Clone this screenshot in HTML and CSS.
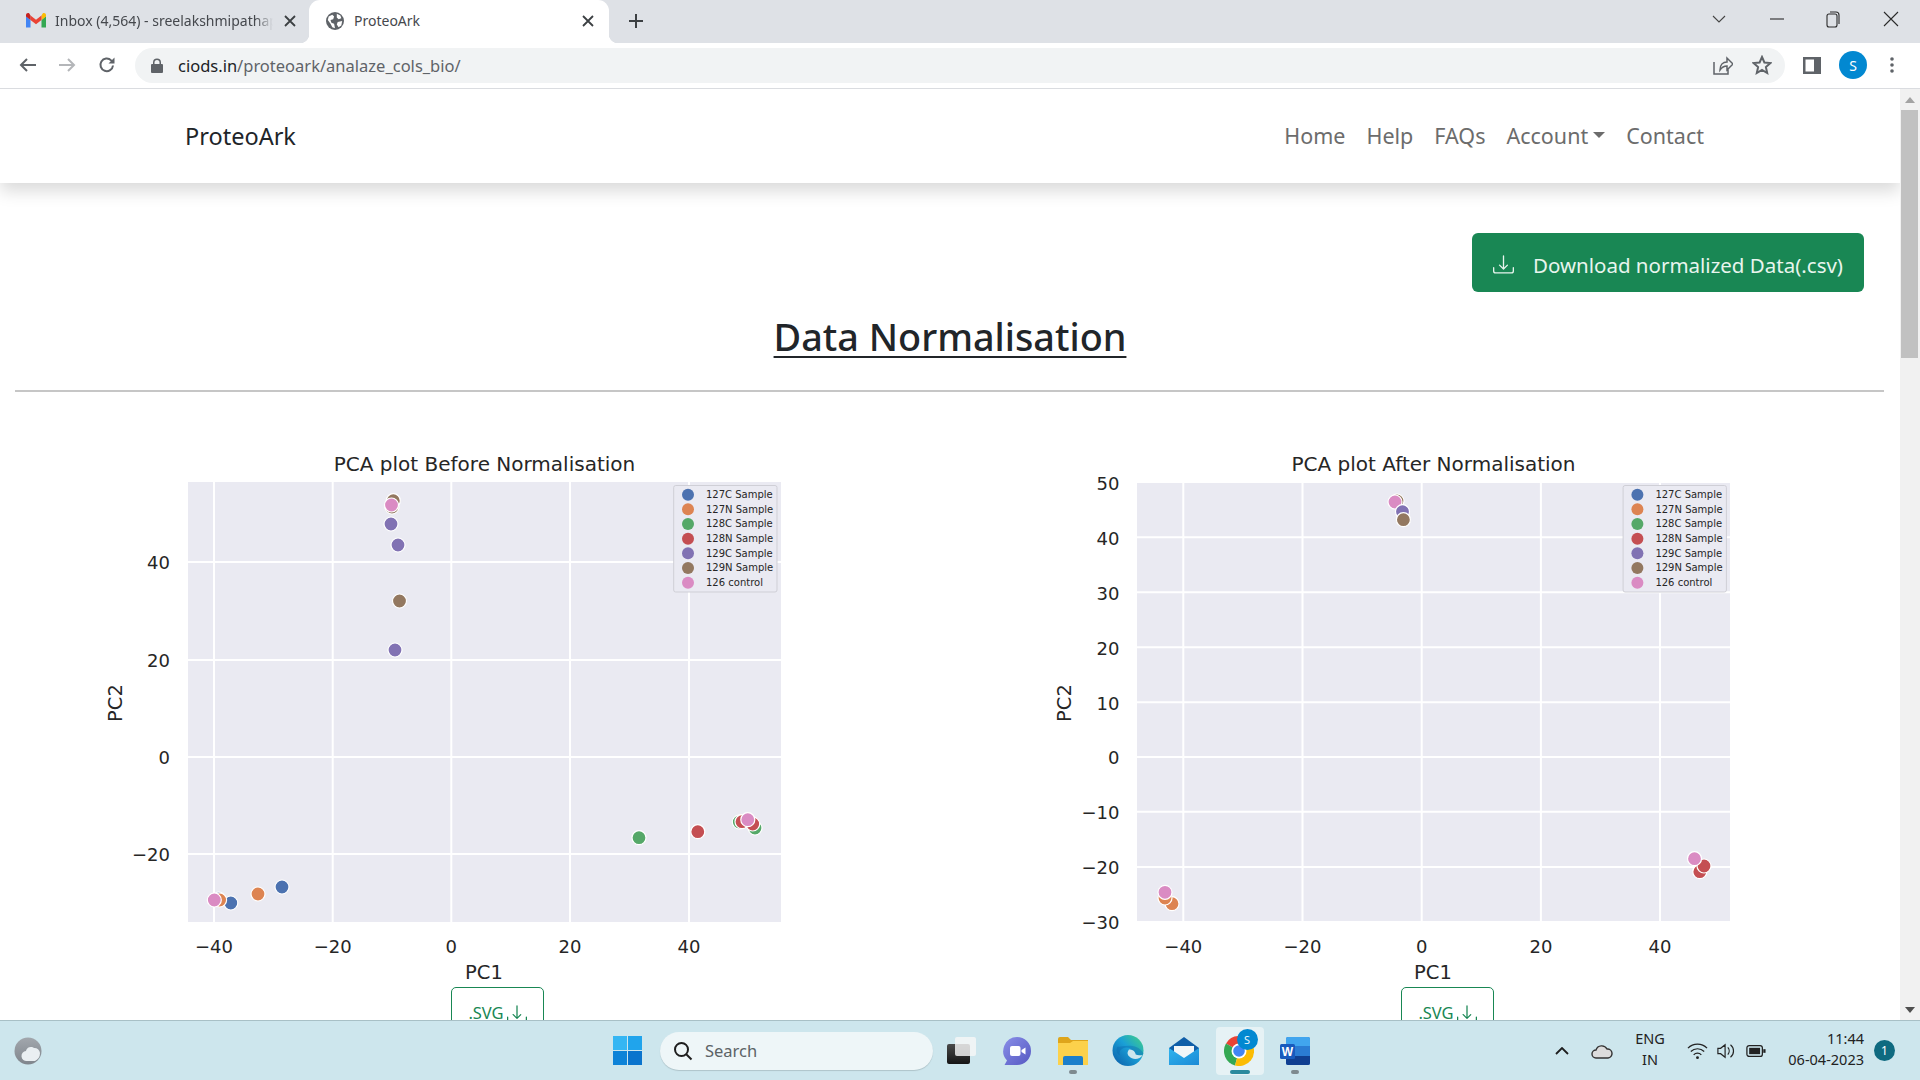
FILE: index.html
```html
<!DOCTYPE html>
<html lang="en">
<head>
<meta charset="utf-8">
<title>ProteoArk</title>
<link rel="stylesheet" href="styles.css">
</head>
<body>
<div class="tabstrip">
  <div class="tab tab-inactive">
    <svg class="tab-ico" viewBox="0 0 20 16" width="20" height="16"><path d="M0 3v11.500h4.500V7z" fill="#4285f4"/><path d="M15.500 7v7.500H20V3z" fill="#34a853"/><path d="M15.500 2.500V7L20 3.500V2c0-1.700-2-2.600-3.300-1.500z" fill="#fbbc04"/><path d="M4.500 7V2.500L10 6.700l5.500-4.200V7L10 11.200z" fill="#ea4335"/><path d="M0 2v1.500L4.500 7V2.500L3.300.5C2-.6 0 .3 0 2z" fill="#c5221f"/></svg>
    <span class="tab-title tab-title-fade">Inbox (4,564) - sreelakshmipathap</span>
    <svg class="tab-close" viewBox="0 0 12 12" width="12" height="12"><path d="M1 1l10 10M11 1L1 11"/></svg>
  </div>
  <div class="tab tab-active">
    <svg class="tab-globe" viewBox="0 0 20 20" width="18" height="18"><circle cx="10" cy="10" r="10" fill="#5f6368"/><path d="M3 5l4-2 2 2-1 3-3 1 1 3 3 1 1 5-3-1-2-4-3-4zM12 2l4 2 1 3-3 1-2-2zM13 11l5-1-1 5-3 2-2-3z" fill="#fff"/></svg>
    <span class="tab-title">ProteoArk</span>
    <svg class="tab-close" viewBox="0 0 12 12" width="12" height="12"><path d="M1 1l10 10M11 1L1 11"/></svg>
  </div>
  <svg class="newtab" viewBox="0 0 16 16" width="16" height="16"><path d="M8 1v14M1 8h14"/></svg>
  <div class="win-controls">
    <svg class="win-ico win-chev" viewBox="0 0 14 8" width="14" height="8"><path d="M1 1l6 6 6-6"/></svg>
    <svg class="win-ico win-min" viewBox="0 0 14 2" width="14" height="2"><path d="M0 1h14"/></svg>
    <svg class="win-ico win-max" viewBox="0 0 14 17" width="14" height="17"><rect x="1" y="3" width="10" height="13" rx="2"/><path d="M4 1h6a3 3 0 0 1 3 3v9"/></svg>
    <svg class="win-ico win-x" viewBox="0 0 16 16" width="16" height="16"><path d="M1 1l14 14M15 1L1 15"/></svg>
  </div>
</div>
<div class="toolbar">
  <svg class="tb-ico tb-back" viewBox="0 0 18 16" width="18" height="16"><path d="M17 8H2M8 2L2 8l6 6"/></svg>
  <svg class="tb-ico tb-fwd" viewBox="0 0 18 16" width="18" height="16"><path d="M1 8h15M10 2l6 6-6 6"/></svg>
  <svg class="tb-ico tb-reload" viewBox="0 0 18 18" width="18" height="18"><path d="M15 9.500A6.300 6.300 0 1 1 13.200 4.400L15.500 6.500"/><path class="solid" d="M16.500 1.500v6h-6z"/></svg>
  <div class="omnibox">
    <svg class="lock" viewBox="0 0 12 15" width="12" height="15"><path d="M2 6V4.500a4 4 0 0 1 8 0V6h1a1 1 0 0 1 1 1v7a1 1 0 0 1-1 1H1a1 1 0 0 1-1-1V7a1 1 0 0 1 1-1zm1.500 0h5V4.500a2.500 2.500 0 0 0-5 0z" fill="#5f6368"/></svg>
    <span class="url"><span class="url-host">ciods.in</span>/proteoark/analaze_cols_bio/</span>
    <svg class="omni-ico omni-share" viewBox="0 0 20 20" width="20" height="20"><path d="M1 7v12h14v-5M7 15c0-5 3-8 7-8V3l6 6-6 6v-4c-3 0-5 1-7 4z"/></svg>
    <svg class="omni-ico omni-star" viewBox="0 0 20 20" width="20" height="20"><path d="M10 2l2.400 5.500 6 .6-4.500 4 1.300 5.900L10 15l-5.200 3 1.300-5.900-4.500-4 6-.6z"/></svg>
  </div>
  <svg class="side-ico" viewBox="0 0 18 17" width="18" height="17"><path d="M0 0h18v17H0zm2.500 2.500v12H11v-12z" fill="#5f6368"/></svg>
  <div class="avatar">S</div>
  <svg class="kebab" viewBox="0 0 4 16" width="4" height="16"><circle cx="2" cy="2" r="1.800"/><circle cx="2" cy="8" r="1.800"/><circle cx="2" cy="14" r="1.800"/></svg>
</div>
<div class="viewport">
  <div class="page">
    <nav class="navbar">
      <span class="brand">ProteoArk</span>
      <ul class="nav-links">
        <li>Home</li>
        <li>Help</li>
        <li>FAQs</li>
        <li class="dropdown">Account<span class="caret"></span></li>
        <li>Contact</li>
      </ul>
    </nav>
    <div class="action-row">
      <button class="btn-download">
        <svg class="dl-ico" viewBox="0 0 16 16" width="21" height="21"><path d="M.5 9.900a.5.500 0 0 1 .5.500v2.500a1 1 0 0 0 1 1h12a1 1 0 0 0 1-1v-2.500a.5.500 0 0 1 1 0v2.500a2 2 0 0 1-2 2H2a2 2 0 0 1-2-2v-2.500a.5.500 0 0 1 .5-.5z"/><path d="M7.650 11.850a.5.500 0 0 0 .7 0l3-3a.5.500 0 0 0-.7-.7L8.500 10.300V1.500a.5.500 0 0 0-1 0v8.800L5.350 8.150a.5.500 0 1 0-.7.7z"/></svg>
        <span>Download normalized Data(.csv)</span>
      </button>
    </div>
    <h1 class="page-title"><span>Data Normalisation</span></h1>
    <hr class="rule">
    <div class="plots">
      <section class="plot-cell">
        <svg class="plot" viewBox="0 440 950 545" width="950" height="545">
          <text class="p-title" x="484.500" y="471">PCA plot Before Normalisation</text>
          <rect class="panel" x="188" y="482" width="593" height="440"/>
          <g class="grid">
            <path d="M214 482V922M332.700 482V922M451.300 482V922M570 482V922M689 482V922"/>
            <path d="M188 562H781M188 660H781M188 757H781M188 854H781"/>
          </g>
          <g class="ytick">
            <text x="170" y="569">40</text><text x="170" y="666.500">20</text><text x="170" y="764">0</text><text x="170" y="861">−20</text>
          </g>
          <g class="xtick">
            <text x="214" y="953">−40</text><text x="332.700" y="953">−20</text><text x="451.300" y="953">0</text><text x="570" y="953">20</text><text x="689" y="953">40</text>
          </g>
          <text class="p-label" x="484" y="979">PC1</text>
          <text class="p-label" transform="translate(122 703) rotate(-90)">PC2</text>
          <g class="pts">
            <circle class="c5" cx="393.300" cy="500.700" r="7"/><circle class="c5" cx="392" cy="507" r="7"/><circle class="c6" cx="391.500" cy="505" r="7"/>
            <circle class="c4" cx="391" cy="524" r="7"/><circle class="c4" cx="398" cy="545" r="7"/><circle class="c5" cx="399.500" cy="601" r="7"/><circle class="c4" cx="395" cy="650" r="7"/>
            <circle class="c2" cx="639" cy="837.700" r="7"/><circle class="c3" cx="697.800" cy="831.700" r="7"/><circle class="c2" cx="739.300" cy="822" r="7"/><circle class="c2" cx="755" cy="828" r="7"/><circle class="c3" cx="742" cy="821.700" r="7"/><circle class="c3" cx="752.700" cy="824" r="7"/><circle class="c6" cx="747.800" cy="819.700" r="7"/>
            <circle class="c0" cx="282" cy="887" r="7"/><circle class="c1" cx="258" cy="894" r="7"/><circle class="c0" cx="230.800" cy="903" r="7"/><circle class="c0" cx="218.800" cy="899" r="7"/><circle class="c1" cx="219.600" cy="900" r="7"/><circle class="c6" cx="214.300" cy="900" r="7"/>
          </g>
          <g class="legend">
            <rect class="leg-box" x="673.700" y="485.500" width="103.300" height="106.500" rx="2"/>
            <circle class="c0" cx="688" cy="494.700" r="6"/><text x="706" y="497.800">127C Sample</text>
            <circle class="c1" cx="688" cy="509.300" r="6"/><text x="706" y="512.500">127N Sample</text>
            <circle class="c2" cx="688" cy="524" r="6"/><text x="706" y="527.200">128C Sample</text>
            <circle class="c3" cx="688" cy="538.700" r="6"/><text x="706" y="541.900">128N Sample</text>
            <circle class="c4" cx="688" cy="553.300" r="6"/><text x="706" y="556.600">129C Sample</text>
            <circle class="c5" cx="688" cy="568" r="6"/><text x="706" y="571.300">129N Sample</text>
            <circle class="c6" cx="688" cy="582.700" r="6"/><text x="706" y="585.900">126 control</text>
          </g>
        </svg>
        <button class="btn-svg"><span>.SVG</span><svg class="svg-ico" viewBox="0 0 16 16" width="20" height="20"><path d="M.5 9.900a.5.500 0 0 1 .5.500v2.500a1 1 0 0 0 1 1h12a1 1 0 0 0 1-1v-2.500a.5.500 0 0 1 1 0v2.500a2 2 0 0 1-2 2H2a2 2 0 0 1-2-2v-2.500a.5.500 0 0 1 .5-.5z"/><path d="M7.650 11.850a.5.500 0 0 0 .7 0l3-3a.5.500 0 0 0-.7-.7L8.500 10.300V1.500a.5.500 0 0 0-1 0v8.800L5.350 8.150a.5.500 0 1 0-.7.7z"/></svg></button>
      </section>
      <section class="plot-cell">
        <svg class="plot" viewBox="950 440 950 545" width="950" height="545">
          <text class="p-title" x="1433.500" y="471">PCA plot After Normalisation</text>
          <rect class="panel" x="1137" y="483" width="593" height="438"/>
          <g class="grid">
            <path d="M1183.300 483V921M1302.500 483V921M1421.700 483V921M1540.900 483V921M1660 483V921"/>
            <path d="M1137 537.300H1730M1137 592.300H1730M1137 647.300H1730M1137 702.300H1730M1137 757H1730M1137 811.700H1730M1137 867H1730"/>
          </g>
          <g class="ytick">
            <text x="1119.500" y="490">50</text><text x="1119.500" y="545">40</text><text x="1119.500" y="600">30</text><text x="1119.500" y="655">20</text><text x="1119.500" y="710">10</text><text x="1119.500" y="764">0</text><text x="1119.500" y="819">−10</text><text x="1119.500" y="874">−20</text><text x="1119.500" y="929">−30</text>
          </g>
          <g class="xtick">
            <text x="1183.300" y="953">−40</text><text x="1302.500" y="953">−20</text><text x="1421.700" y="953">0</text><text x="1540.900" y="953">20</text><text x="1660" y="953">40</text>
          </g>
          <text class="p-label" x="1433" y="979">PC1</text>
          <text class="p-label" transform="translate(1071 703) rotate(-90)">PC2</text>
          <g class="pts">
            <circle class="c5" cx="1397" cy="501" r="7"/><circle class="c6" cx="1395" cy="502" r="7"/><circle class="c4" cx="1402.500" cy="511.700" r="7"/><circle class="c5" cx="1403.400" cy="519.700" r="7"/>
            <circle class="c3" cx="1699.800" cy="871.700" r="7"/><circle class="c3" cx="1704" cy="866" r="7"/><circle class="c6" cx="1694.500" cy="858.700" r="7"/>
            <circle class="c1" cx="1172" cy="903.700" r="7"/><circle class="c1" cx="1165" cy="898" r="7"/><circle class="c6" cx="1165" cy="892.300" r="7"/>
          </g>
          <g class="legend" transform="translate(949.400 0)">
            <rect class="leg-box" x="673.700" y="485.500" width="103.300" height="106.500" rx="2"/>
            <circle class="c0" cx="688" cy="494.700" r="6"/><text x="706" y="497.800">127C Sample</text>
            <circle class="c1" cx="688" cy="509.300" r="6"/><text x="706" y="512.500">127N Sample</text>
            <circle class="c2" cx="688" cy="524" r="6"/><text x="706" y="527.200">128C Sample</text>
            <circle class="c3" cx="688" cy="538.700" r="6"/><text x="706" y="541.900">128N Sample</text>
            <circle class="c4" cx="688" cy="553.300" r="6"/><text x="706" y="556.600">129C Sample</text>
            <circle class="c5" cx="688" cy="568" r="6"/><text x="706" y="571.300">129N Sample</text>
            <circle class="c6" cx="688" cy="582.700" r="6"/><text x="706" y="585.900">126 control</text>
          </g>
        </svg>
        <button class="btn-svg"><span>.SVG</span><svg class="svg-ico" viewBox="0 0 16 16" width="20" height="20"><path d="M.5 9.900a.5.500 0 0 1 .5.500v2.500a1 1 0 0 0 1 1h12a1 1 0 0 0 1-1v-2.500a.5.500 0 0 1 1 0v2.500a2 2 0 0 1-2 2H2a2 2 0 0 1-2-2v-2.500a.5.500 0 0 1 .5-.5z"/><path d="M7.650 11.850a.5.500 0 0 0 .7 0l3-3a.5.500 0 0 0-.7-.7L8.500 10.300V1.500a.5.500 0 0 0-1 0v8.800L5.350 8.150a.5.500 0 1 0-.7.7z"/></svg></button>
      </section>
    </div>
  </div>
  <div class="scrollbar">
    <div class="sb-btn"><span class="sb-up"></span></div>
    <div class="sb-thumb"></div>
    <div class="sb-track"></div>
    <div class="sb-btn"><span class="sb-down"></span></div>
  </div>
</div>
<footer class="taskbar">
  <svg class="tk-weather" viewBox="0 0 28 28" width="28" height="28"><defs><linearGradient id="wg" x1="0" y1="0" x2="0" y2="1"><stop offset="0" stop-color="#a2a7ad"/><stop offset="1" stop-color="#7f858c"/></linearGradient></defs><circle cx="14" cy="14" r="13.500" fill="url(#wg)"/><path d="M13 24a5 5 0 0 1-1-10 5 5 0 0 1 8-3 5.500 5.500 0 0 1 6 5 9 9 0 0 1-5 8z" fill="#eaeff2"/></svg>
  <svg class="tk-win" viewBox="0 0 29 29" width="29" height="29"><path d="M0 0h14v14H0z" fill="#35b6f3"/><path d="M15 0h14v14H15z" fill="#20a4ec"/><path d="M0 15h14v14H0z" fill="#0d83d8"/><path d="M15 15h14v14H15z" fill="#0a74cd"/></svg>
  <div class="tk-search">
    <svg class="tk-mag" viewBox="0 0 20 20" width="20" height="20"><circle cx="8.500" cy="8.500" r="6.500"/><path d="M13 13l5.500 5.500"/></svg>
    <span>Search</span>
  </div>
  <div class="tk-apps">
    <div class="tk-app">
      <svg viewBox="0 0 30 28" width="30" height="28"><defs><linearGradient id="tv" x1="0" y1="0" x2="0" y2="1"><stop offset="0" stop-color="#4a4a4a"/><stop offset="1" stop-color="#151515"/></linearGradient></defs><rect x="0" y="7" width="23" height="20" rx="2" fill="url(#tv)"/><rect x="8" y="0" width="21" height="19" rx="2" fill="#f6f6f6" fill-opacity=".82"/></svg>
    </div>
    <div class="tk-app">
      <svg viewBox="0 0 30 30" width="30" height="30"><defs><linearGradient id="cg" x1="0" y1="0" x2="1" y2="1"><stop offset="0" stop-color="#8a8fe8"/><stop offset="1" stop-color="#5558c2"/></linearGradient></defs><path d="M15 1a14 14 0 0 1 0 28H2.500L5 24.500A14 14 0 0 1 15 1z" fill="url(#cg)"/><rect x="8" y="10" width="10.500" height="10" rx="2" fill="#fff"/><path d="M19.500 14l4-2.500v7l-4-2.500z" fill="#fff"/></svg>
    </div>
    <div class="tk-app tk-open">
      <svg viewBox="0 0 30 28" width="30" height="28"><path d="M0 2a2 2 0 0 1 2-2h8l3 3h17v4H0z" fill="#dea51b"/><path d="M0 6h12l3-2h15v24H0z" fill="#fcd14b"/><path d="M5 21a2 2 0 0 1 2-2h16a2 2 0 0 1 2 2v7H5z" fill="#1b7fcb"/></svg>
    </div>
    <div class="tk-app">
      <svg viewBox="0 0 32 32" width="32" height="31"><defs><linearGradient id="eg" x1="1" y1="0" x2="0" y2="1"><stop offset="0" stop-color="#45d47e"/><stop offset=".45" stop-color="#1a9fd6"/><stop offset="1" stop-color="#0b5aa6"/></linearGradient></defs><circle cx="16" cy="16" r="16" fill="url(#eg)"/><path d="M32 19c-2 4-7 6-12 4-3-1-5-4-3-7 1-1 2-1 3-1-3-3-9-3-12 1-1 2-1 4 0 5-3-1-5-5-3-9 2 1 20-6 27 7z" fill="#0a5ea8" fill-opacity=".35"/><path d="M31 21c-2 3-7 5-11 3-4-2-6-5-3-9 3 0 6 1 7 5 2 1 5 1 7 1z" fill="#cde6ed"/></svg>
    </div>
    <div class="tk-app">
      <svg viewBox="0 0 30 28" width="30" height="28"><defs><linearGradient id="mg" x1="0" y1="0" x2="1" y2="1"><stop offset="0" stop-color="#2fb4ee"/><stop offset="1" stop-color="#1b8ad6"/></linearGradient></defs><path d="M15 0l15 11v6H0v-6z" fill="#0f5ea8"/><path d="M5 9h20v8l-10 6-10-6z" fill="#f2f6f8"/><path d="M0 11l15 10 15-10v17H0z" fill="url(#mg)"/></svg>
    </div>
    <div class="tk-app tk-active">
      <svg viewBox="0 0 30 30" width="30" height="30"><path d="M15 15L2 7.500A15 15 0 0 1 28 7.500z" fill="#ea4335"/><path d="M15 15L2 7.500A15 15 0 0 0 11 29.500z" fill="#34a853"/><path d="M15 15l-4 14.500A15 15 0 0 0 28 7.500z" fill="#fbbc04"/><circle cx="15" cy="15" r="7.500" fill="#fff"/><circle cx="15" cy="15" r="5.800" fill="#4285f4"/></svg>
      <span class="tk-badge">S</span>
    </div>
    <div class="tk-app tk-open">
      <svg viewBox="0 0 30 28" width="30" height="28"><rect x="6" y="0" width="24" height="28" rx="2" fill="#2b7cd3"/><path d="M8 0h20a2 2 0 0 1 2 2v7H6V2a2 2 0 0 1 2-2z" fill="#41a5ee"/><path d="M6 19h24v7a2 2 0 0 1-2 2H8a2 2 0 0 1-2-2z" fill="#103f91"/><rect x="0" y="7" width="15" height="15" rx="1.500" fill="#185abd"/><text class="tk-w" x="7.500" y="18.500">W</text></svg>
    </div>
  </div>
  <div class="tk-tray">
    <svg class="tr-chev" viewBox="0 0 14 8" width="14" height="8"><path d="M1 7l6-6 6 6"/></svg>
    <svg class="tr-cloud" viewBox="0 0 22 18" width="22" height="18"><path d="M5 16a4 4 0 0 1 0-8 6 6 0 0 1 11-1 4.500 4.500 0 0 1 1 9z"/></svg>
    <div class="tr-lang"><span>ENG</span><span>IN</span></div>
    <svg class="tr-wifi" viewBox="0 0 22 18" width="21" height="18"><path d="M1 6a14 14 0 0 1 20 0M4 9.500a10 10 0 0 1 14 0M7 13a5.500 5.500 0 0 1 8 0"/><circle class="solid" cx="11" cy="16" r="1.500"/></svg>
    <svg class="tr-vol" viewBox="0 0 20 18" width="18" height="18"><path d="M1 6v6h3l5 4V2L4 6zM12 5a6 6 0 0 1 0 8M15 2a9 9 0 0 1 0 14"/></svg>
    <svg class="tr-bat" viewBox="0 0 22 14" width="20" height="14"><rect x="1" y="1" width="17" height="12" rx="2.500"/><rect class="solid" x="3.500" y="3.500" width="12" height="7"/><rect class="solid" x="19" y="5" width="2.500" height="4"/></svg>
    <div class="tr-clock"><span>11:44</span><span>06-04-2023</span></div>
    <span class="tr-note">1</span>
  </div>
</footer>
</body>
</html>
```
FILE: styles.css
```css
* { box-sizing: border-box; }
html, body { margin: 0; padding: 0; }
body {
  width: 1920px;
  height: 1080px;
  overflow: hidden;
  display: flex;
  flex-direction: column;
  font-family: "Noto Sans", "Liberation Sans", sans-serif;
  background: #fff;
  color: #212529;
}

/* tab strip */
.tabstrip {
  height: 43px;
  flex: none;
  background: #dee1e6;
  display: flex;
  align-items: center;
}
.tab { height: 43px; display: flex; align-items: center; flex: none; padding-bottom: 2px; }
.tab-inactive { width: 309px; padding-left: 26px; }
.tab-active {
  position: relative;
  width: 300px;
  padding-left: 17px;
  background: #fff;
  border-radius: 11px 11px 0 0;
}
.tab-active::before,
.tab-active::after {
  content: "";
  position: absolute;
  bottom: 0;
  width: 9px;
  height: 9px;
}
.tab-active::before { left: -9px; background: radial-gradient(circle at 0 0, transparent 9px, #fff 9.500px); }
.tab-active::after { right: -9px; background: radial-gradient(circle at 100% 0, transparent 9px, #fff 9.500px); }
.tab-ico { flex: none; }
.tab-globe { flex: none; }
.tab-title {
  font-size: 14px;
  color: #45484d;
  white-space: nowrap;
  overflow: hidden;
}
.tab-inactive .tab-title { width: 218px; margin-left: 9px; }
.tab-active .tab-title { width: 220px; margin-left: 10px; }
.tab-title-fade {
  -webkit-mask-image: linear-gradient(90deg, #000 92%, transparent);
  mask-image: linear-gradient(90deg, #000 92%, transparent);
}
.tab-close { fill: none; stroke: #3c4043; stroke-width: 1.800; flex: none; }
.tab-inactive .tab-close { margin-left: 11px; }
.tab-active .tab-close { margin-left: 8px; }
.newtab { fill: none; stroke: #3c4043; stroke-width: 2; margin: 0 0 2px 19px; flex: none; }
.win-controls { margin-left: auto; display: flex; align-items: center; padding-bottom: 5px; }
.win-ico { fill: none; stroke: #2a2a2a; stroke-width: 1.100; flex: none; }
.win-chev { margin-right: 44px; stroke: #444; }
.win-min { margin-right: 42px; }
.win-max { margin-right: 43px; }
.win-x { margin-right: 21px; }

/* toolbar */
.toolbar {
  height: 46px;
  flex: none;
  background: #fff;
  border-bottom: 1px solid #dadce0;
  display: flex;
  align-items: center;
  padding-bottom: 1px;
}
.tb-ico { fill: none; stroke: #5f6368; stroke-width: 2; flex: none; }
.tb-ico .solid { fill: #5f6368; stroke: none; }
.tb-back { margin-left: 19px; }
.tb-fwd { margin-left: 21px; stroke: #b4b6b9; }
.tb-reload { margin-left: 22px; }
.omnibox {
  margin-left: 19px;
  width: 1650px;
  height: 35px;
  border-radius: 18px;
  background: #f1f3f4;
  display: flex;
  align-items: center;
  padding-left: 16px;
  flex: none;
}
.lock { flex: none; }
.url { margin-left: 15px; font-size: 16.500px; color: #5f6368; white-space: nowrap; }
.url-host { color: #202124; }
.omni-ico { fill: none; stroke: #5f6368; stroke-width: 1.500; flex: none; }
.omni-share { margin-left: auto; }
.omni-star { margin-left: 19px; margin-right: 13px; stroke-width: 2; }
.side-ico { margin-left: 18px; flex: none; }
.avatar {
  margin-left: 18px;
  width: 28px;
  height: 28px;
  border-radius: 50%;
  background: #0288d1;
  color: #fff;
  font-size: 14px;
  display: flex;
  align-items: center;
  justify-content: center;
  flex: none;
}
.kebab { margin-left: 23px; fill: #5f6368; flex: none; }

/* page viewport */
.viewport { flex: 1; min-height: 0; display: flex; overflow: hidden; }
.page { width: 1900px; flex: none; overflow: hidden; }
.navbar {
  height: 94px;
  background: #fff;
  box-shadow: 0 8px 16px rgba(0, 0, 0, .15);
  display: flex;
  align-items: center;
  padding: 0 196px 0 185px;
  justify-content: space-between;
}
.brand { font-size: 23.500px; color: #212529; }
.nav-links {
  list-style: none;
  margin: 0 0 2px;
  padding: 0;
  display: flex;
  gap: 21px;
  font-size: 21.500px;
  color: #6c6c6c;
}
.dropdown { display: flex; align-items: center; }
.caret {
  margin-left: 5px;
  border-top: 6px solid #6c6c6c;
  border-left: 6px solid transparent;
  border-right: 6px solid transparent;
}
.action-row { display: flex; justify-content: flex-end; padding: 50px 36px 0 0; }
.btn-download {
  width: 392px;
  height: 59px;
  border: 0;
  border-radius: 6px;
  background: #198754;
  color: #e8f5ee;
  font-family: inherit;
  font-size: 20.500px;
  display: flex;
  align-items: center;
  padding: 4px 0 0 21px;
}
.dl-ico { fill: #e8f5ee; margin-right: 19px; flex: none; }
.page-title {
  margin: 16px 0 0;
  height: 58px;
  text-align: center;
  font-size: 37.800px;
  font-weight: 500;
  line-height: 58px;
}
.page-title span { text-decoration: underline; text-decoration-thickness: 2px; text-underline-offset: 5px; }
.rule { margin: 24px 16px 0 15px; border: 0; border-top: 2px solid #c6c6c6; height: 0; }

/* plots */
.plots { display: grid; grid-template-columns: 950px 950px; margin-top: 48px; }
.plot-cell { display: flex; flex-direction: column; align-items: flex-start; }
.plot { display: block; flex: none; }
.p-title, .p-label, .ytick text, .xtick text, .legend text { font-family: "DejaVu Sans", sans-serif; fill: #262626; }
.p-title { font-size: 20px; text-anchor: middle; }
.p-label { font-size: 19.500px; text-anchor: middle; }
.ytick text { font-size: 18px; text-anchor: end; }
.xtick text { font-size: 18px; text-anchor: middle; }
.legend text { font-size: 10px; }
.panel { fill: #eaeaf2; }
.grid path { fill: none; stroke: #fff; stroke-width: 2; }
.pts circle { stroke: #fff; stroke-width: 1.200; }
.leg-box { fill: #eaeaf2; stroke: #cfcfd6; stroke-width: 1; }
.c0 { fill: #4c72b0; }
.c1 { fill: #dd8452; }
.c2 { fill: #55a868; }
.c3 { fill: #c44e52; }
.c4 { fill: #8172b3; }
.c5 { fill: #937860; }
.c6 { fill: #da8bc3; }
.btn-svg {
  margin: 2px 0 0 451px;
  width: 93px;
  height: 56px;
  flex: none;
  background: #fff;
  border: 1px solid #198754;
  border-radius: 5px;
  color: #198754;
  font-family: inherit;
  font-size: 16.500px;
  display: flex;
  align-items: flex-start;
  justify-content: center;
  gap: 3px;
  padding: 13px 0 0;
}
.svg-ico { fill: #198754; flex: none; margin-top: 3px; }

/* scrollbar */
.scrollbar { width: 20px; flex: none; background: #f1f1f1; display: flex; flex-direction: column; padding: 0 2px 0 1px; }
.sb-btn { height: 21px; flex: none; display: flex; align-items: center; justify-content: center; }
.sb-up { border-bottom: 6px solid #a3a3a3; border-left: 5px solid transparent; border-right: 5px solid transparent; }
.sb-down { border-top: 6px solid #505050; border-left: 5px solid transparent; border-right: 5px solid transparent; }
.sb-thumb { height: 248px; flex: none; background: #c1c1c1; }
.sb-track { flex: 1; }

/* taskbar */
.taskbar {
  height: 60px;
  flex: none;
  background: #cde6ed;
  border-top: 1px solid #a8c0c6;
  display: flex;
  align-items: center;
  position: relative;
}
.tk-weather { margin-left: 14px; flex: none; }
.tk-win { margin-left: 571px; flex: none; }
.tk-search {
  margin-left: 18px;
  width: 273px;
  height: 38px;
  border-radius: 19px;
  background: #eef6f8;
  box-shadow: 0 1px 1px rgba(0, 0, 0, .15);
  display: flex;
  align-items: center;
  padding-left: 13px;
  font-size: 16.500px;
  color: #5c6366;
  flex: none;
}
.tk-mag { fill: none; stroke: #1e1e1e; stroke-width: 2; margin-right: 12px; flex: none; }
.tk-apps { display: flex; margin-left: 1px; flex: none; }
.tk-app {
  width: 55.500px;
  height: 48px;
  display: flex;
  align-items: center;
  justify-content: center;
  position: relative;
  flex: none;
}
.tk-open::after {
  content: "";
  position: absolute;
  left: 50%;
  bottom: 1px;
  width: 8px;
  height: 4px;
  margin-left: -4px;
  border-radius: 2px;
  background: #7e8a8f;
}
.tk-active::before {
  content: "";
  position: absolute;
  left: 4px;
  top: 0;
  width: 48px;
  height: 48px;
  border-radius: 4px;
  background: #e6f2f5;
}
.tk-active::after {
  content: "";
  position: absolute;
  left: 18px;
  bottom: 1px;
  width: 20px;
  height: 4px;
  border-radius: 2px;
  background: #2b8a9e;
}
.tk-active svg { position: relative; }
.tk-badge {
  position: absolute;
  left: 25px;
  top: 2px;
  width: 21px;
  height: 21px;
  border-radius: 50%;
  background: #0288d1;
  color: #e8f5fb;
  font-size: 11px;
  display: flex;
  align-items: center;
  justify-content: center;
}
.tk-w { font-family: "Liberation Sans", sans-serif; font-size: 12px; font-weight: 700; fill: #fff; text-anchor: middle; }
.tk-tray { display: flex; align-items: center; margin-left: auto; flex: none; }
.tr-chev { fill: none; stroke: #1e1e1e; stroke-width: 1.800; margin-right: 22px; flex: none; }
.tr-cloud { fill: #dcdcdc; stroke: #333; stroke-width: 1.400; margin-right: 19px; flex: none; }
.tr-lang { display: flex; flex-direction: column; align-items: center; width: 36px; font-size: 14.500px; line-height: 21px; color: #222; margin: 0 18.500px 3px 0; flex: none; }
.tr-wifi, .tr-vol { fill: none; stroke: #222; stroke-width: 1.300; flex: none; }
.tr-wifi .solid, .tr-bat .solid { fill: #222; stroke: none; }
.tr-wifi { margin-right: 9.500px; }
.tr-vol { margin-right: 11px; }
.tr-bat { fill: none; stroke: #222; stroke-width: 1.400; margin-right: 6px; flex: none; }
.tr-clock { display: flex; flex-direction: column; align-items: flex-end; font-size: 14.500px; line-height: 21px; color: #222; width: 92px; margin-bottom: 3px; flex: none; }
.tr-note {
  margin-left: 10px;
  margin-right: 25px;
  width: 21px;
  height: 21px;
  border-radius: 50%;
  background: #0f6a80;
  color: #fff;
  font-size: 12px;
  display: flex;
  align-items: center;
  justify-content: center;
  flex: none;
}
```
